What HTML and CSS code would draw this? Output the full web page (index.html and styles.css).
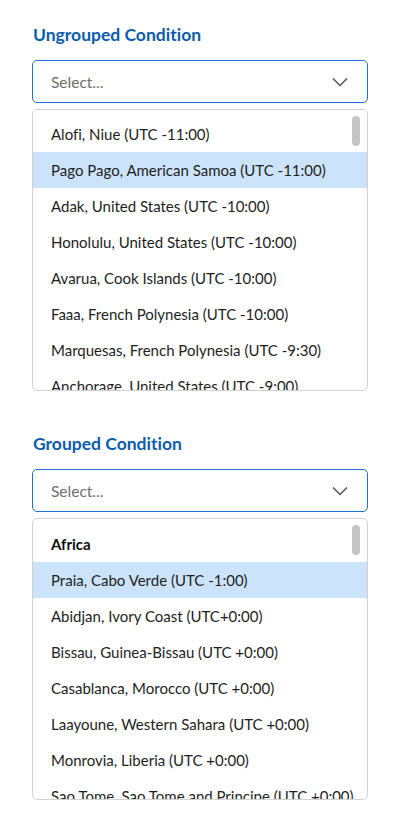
FILE: index.html
```html
<!DOCTYPE html>
<html lang="en">
<head>
<meta charset="utf-8">
<link rel="stylesheet" href="styles.css">
</head>
<body>
<div class="page">
  <section class="field">
    <label class="label">Ungrouped Condition</label>
    <div class="select">
      <span class="placeholder">Select...</span>
      <svg class="chev" width="16" height="10" viewBox="0 0 16 10"><path d="M1 1.5 L8 8.5 L15 1.5" fill="none" stroke="#555" stroke-width="1.5"/></svg>
    </div>
    <div class="listbox">
      <ul class="options">
        <li class="opt">Alofi, Niue (UTC -11:00)</li>
        <li class="opt active">Pago Pago, American Samoa (UTC -11:00)</li>
        <li class="opt">Adak, United States (UTC -10:00)</li>
        <li class="opt">Honolulu, United States (UTC -10:00)</li>
        <li class="opt">Avarua, Cook Islands (UTC -10:00)</li>
        <li class="opt">Faaa, French Polynesia (UTC -10:00)</li>
        <li class="opt">Marquesas, French Polynesia (UTC -9:30)</li>
        <li class="opt">Anchorage, United States (UTC -9:00)</li>
      </ul>
      <div class="thumb"></div>
    </div>
  </section>
  <section class="field">
    <label class="label">Grouped Condition</label>
    <div class="select">
      <span class="placeholder">Select...</span>
      <svg class="chev" width="16" height="10" viewBox="0 0 16 10"><path d="M1 1.5 L8 8.5 L15 1.5" fill="none" stroke="#555" stroke-width="1.5"/></svg>
    </div>
    <div class="listbox">
      <ul class="options grouped">
        <li class="opt group">Africa</li>
        <li class="opt active">Praia, Cabo Verde (UTC -1:00)</li>
        <li class="opt">Abidjan, Ivory Coast (UTC+0:00)</li>
        <li class="opt">Bissau, Guinea-Bissau (UTC +0:00)</li>
        <li class="opt">Casablanca, Morocco (UTC +0:00)</li>
        <li class="opt">Laayoune, Western Sahara (UTC +0:00)</li>
        <li class="opt">Monrovia, Liberia (UTC +0:00)</li>
        <li class="opt">Sao Tome, Sao Tome and Principe (UTC +0:00)</li>
      </ul>
      <div class="thumb"></div>
    </div>
  </section>
</div>
</body>
</html>
```
FILE: styles.css
```css
* { box-sizing: border-box; }
html, body { margin: 0; padding: 0; background: #fff; }
body {
  font-family: "Lato", "Liberation Sans", sans-serif;
  font-variant-ligatures: none;
  color: #222;
}
.page {
  padding: 23px 32px 0 32px;
  display: flex;
  flex-direction: column;
  gap: 41px;
}
.field {
  display: flex;
  flex-direction: column;
}
.label {
  display: block;
  font-weight: 700;
  font-size: 17.5px;
  line-height: 24px;
  color: #0b5cad;
  padding-left: 1px;
  margin-bottom: 13px;
}
.select {
  height: 43px;
  border: 1px solid #1a73d1;
  border-radius: 5px;
  display: flex;
  align-items: center;
  justify-content: space-between;
  padding: 0 19px 0 18px;
}
.placeholder {
  font-size: 15.5px;
  color: #6e6e6e;
}
.chev { display: block; }
.listbox {
  position: relative;
  margin-top: 6px;
  height: 282px;
  border: 1px solid #d2d2d2;
  border-radius: 5px;
  overflow: hidden;
}
.options {
  list-style: none;
  margin: 0;
  padding: 6px 0 0 0;
}
.options.grouped { padding-top: 7px; }
.opt {
  height: 36px;
  line-height: 36px;
  padding-left: 18px;
  font-size: 15px;
  color: #1e1e1e;
  white-space: nowrap;
}
.opt.active { background: #cce4fb; }
.opt.group { font-weight: 700; color: #111; }
.thumb {
  position: absolute;
  top: 6px;
  right: 7px;
  width: 8px;
  height: 30px;
  border-radius: 4px;
  background: #c6c6c6;
}
```
